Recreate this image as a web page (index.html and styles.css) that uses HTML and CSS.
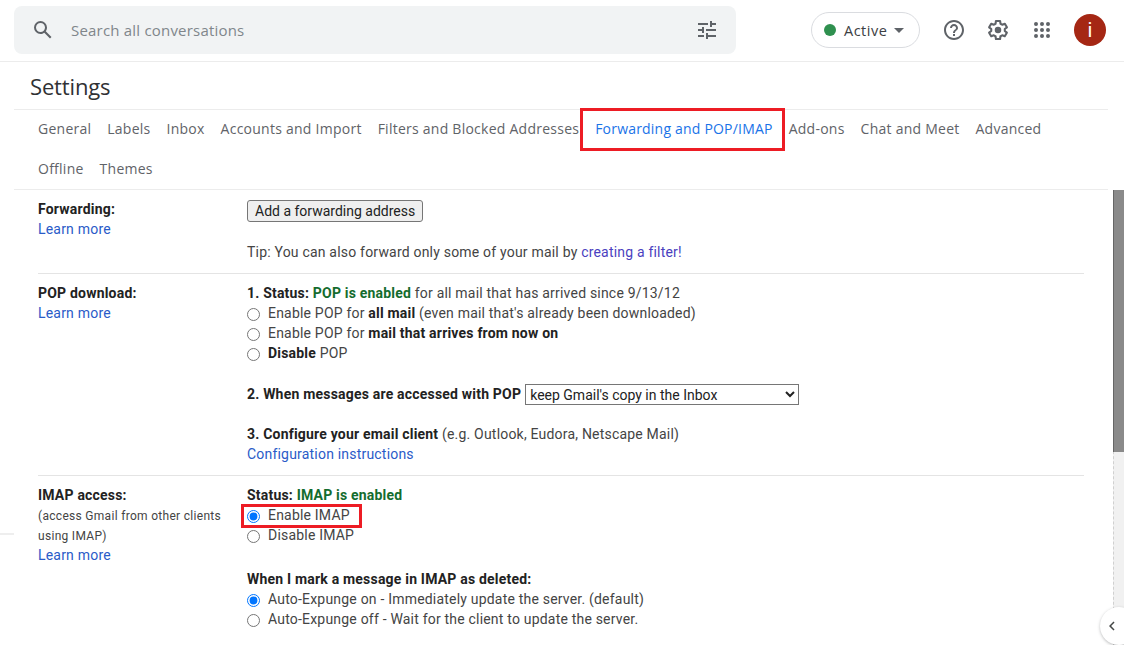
FILE: index.html
```html
<!DOCTYPE html>
<html lang="en">
<head>
<meta charset="utf-8">
<title>Settings</title>
<link rel="stylesheet" href="styles.css">
</head>
<body>
<header class="topbar">
  <div class="search">
    <svg class="search-icon" viewBox="0 0 24 24" width="24" height="24"><path fill="#5f6368" d="M20.49 19l-5.73-5.73C15.53 12.2 16 10.91 16 9.5A6.5 6.5 0 1 0 9.5 16c1.41 0 2.7-.47 3.77-1.24L19 20.49 20.49 19zM5 9.5C5 7.01 7.01 5 9.5 5S14 7.01 14 9.5 11.99 14 9.5 14 5 11.99 5 9.500z"/></svg>
    <span class="search-text">Search all conversations</span>
    <svg class="tune-icon" viewBox="0 0 24 24" width="24" height="24"><path fill="#5f6368" d="M3 17v2h6v-2H3zM3 5v2h10V5H3zm10 16v-2h8v-2h-8v-2h-2v6h2zM7 9v2H3v2h4v2h2V9H7zm14 4v-2H11v2h10zm-6-4h2V7h4V5h-4V3h-2v6z"/></svg>
  </div>
  <div class="status">
    <span class="dot"></span>
    <span class="status-text">Active</span>
    <span class="caret"></span>
  </div>
  <div class="actions">
    <svg viewBox="0 0 24 24" width="24" height="24"><path fill="#5f6368" d="M11 18h2v-2h-2v2zm1-16C6.48 2 2 6.48 2 12s4.48 10 10 10 10-4.48 10-10S17.52 2 12 2zm0 18c-4.41 0-8-3.59-8-8s3.59-8 8-8 8 3.59 8 8-3.59 8-8 8zm0-14c-2.21 0-4 1.790-4 4h2c0-1.100.9-2 2-2s2 .9 2 2c0 2-3 1.750-3 5h2c0-2.250 3-2.500 3-5 0-2.210-1.790-4-4-4z"/></svg>
    <svg viewBox="1 1 22 22" width="24" height="24"><path fill="none" stroke="#5f6368" stroke-width="1.900" stroke-linejoin="round" d="M18.200 12.900c.04-.3.06-.6.06-.9s-.02-.6-.07-.9l2-1.550-1.900-3.300-2.350.95c-.5-.38-1.030-.7-1.620-.94L13.900 3.750h-3.800l-.36 2.510c-.59.24-1.130.57-1.620.94l-2.350-.95-1.900 3.300 2 1.550c-.05.3-.08.6-.08.9s.02.6.07.9l-2 1.550 1.900 3.300 2.350-.95c.5.38 1.030.7 1.620.94l.36 2.510h3.800l.36-2.510c.59-.24 1.130-.56 1.620-.94l2.350.95 1.900-3.300z"/><circle cx="12" cy="12" r="3" fill="#5f6368"/></svg>
    <svg viewBox="0 0 24 24" width="24" height="24"><path fill="#5f6368" d="M6 8a2 2 0 1 0 0-4 2 2 0 0 0 0 4zm6 12a2 2 0 1 0 0-4 2 2 0 0 0 0 4zm-6 0a2 2 0 1 0 0-4 2 2 0 0 0 0 4zm0-6a2 2 0 1 0 0-4 2 2 0 0 0 0 4zm6 0a2 2 0 1 0 0-4 2 2 0 0 0 0 4zm4-8a2 2 0 1 0 4 0 2 2 0 0 0-4 0zm-4 2a2 2 0 1 0 0-4 2 2 0 0 0 0 4zm6 6a2 2 0 1 0 0-4 2 2 0 0 0 0 4zm0 6a2 2 0 1 0 0-4 2 2 0 0 0 0 4z"/></svg>
  </div>
  <div class="avatar">i</div>
</header>

<main class="page">
  <h1 class="title">Settings</h1>
  <nav class="tabs">
    <a class="tab">General</a>
    <a class="tab">Labels</a>
    <a class="tab">Inbox</a>
    <a class="tab">Accounts and Import</a>
    <a class="tab">Filters and Blocked Addresses</a>
    <a class="tab tab-active">Forwarding and POP/IMAP</a>
    <a class="tab">Add-ons</a>
    <a class="tab">Chat and Meet</a>
    <a class="tab">Advanced</a>
    <a class="tab">Offline</a>
    <a class="tab">Themes</a>
  </nav>
  <div class="content">
    <section class="row row-first">
      <div class="label">
        <div class="strong">Forwarding:</div>
        <a class="link">Learn more</a>
      </div>
      <div class="body">
        <button class="btn" type="button">Add a forwarding address</button>
        <p class="tip">Tip: You can also forward only some of your mail by <a class="link-purple">creating a filter!</a></p>
      </div>
    </section>

    <section class="row row-pop">
      <div class="label">
        <div class="strong">POP download:</div>
        <a class="link">Learn more</a>
      </div>
      <div class="body">
        <div class="line"><b>1. Status: <span class="green">POP is enabled</span></b> for all mail that has arrived since 9/13/12</div>
        <label class="opt"><input type="radio" name="pop" class="radio"><span>Enable POP for <b>all mail</b> (even mail that's already been downloaded)</span></label>
        <label class="opt"><input type="radio" name="pop" class="radio"><span>Enable POP for <b>mail that arrives from now on</b></span></label>
        <label class="opt"><input type="radio" name="pop" class="radio"><span><b>Disable</b> POP</span></label>
        <div class="line line-select"><b>2. When messages are accessed with POP</b>
          <select class="select"><option>keep Gmail's copy in the Inbox</option></select>
        </div>
        <div class="line gap"><b>3. Configure your email client</b> (e.g. Outlook, Eudora, Netscape Mail)</div>
        <a class="link">Configuration instructions</a>
      </div>
    </section>

    <section class="row row-imap">
      <div class="label">
        <div class="strong">IMAP access:</div>
        <div class="small">(access Gmail from other clients<br>using IMAP)</div>
        <a class="link">Learn more</a>
      </div>
      <div class="body">
        <div class="line"><b>Status: <span class="green">IMAP is enabled</span></b></div>
        <label class="opt opt-marked"><input type="radio" name="imap" class="radio" checked><span>Enable IMAP</span></label>
        <label class="opt"><input type="radio" name="imap" class="radio"><span>Disable IMAP</span></label>
        <div class="line gap-lg"><b>When I mark a message in IMAP as deleted:</b></div>
        <label class="opt"><input type="radio" name="exp" class="radio" checked><span>Auto-Expunge on - Immediately update the server. (default)</span></label>
        <label class="opt"><input type="radio" name="exp" class="radio"><span>Auto-Expunge off - Wait for the client to update the server.</span></label>
      </div>
    </section>
  </div>
</main>

<div class="scrollbar"><div class="thumb"></div></div>
<div class="edge-line"></div>
<div class="side-toggle">
  <svg viewBox="0 0 24 24" width="18" height="18"><path fill="#444746" d="M15.4 7.4L14 6l-6 6 6 6 1.400-1.400L10.800 12z"/></svg>
</div>
</body>
</html>
```
FILE: styles.css
```css
* { box-sizing: border-box; }
html, body { height: 100%; }
body {
  margin: 0;
  height: 645px;
  overflow: hidden;
  position: relative;
  background: #fff;
  color: #222;
  font-family: Roboto, "Liberation Sans", sans-serif;
  font-size: 14px;
  letter-spacing: .2px;
}
.topbar {
  height: 62px;
  border-bottom: 1px solid #ececec;
  display: flex;
  align-items: center;
  padding: 0 18px 1px 14px;
}
.search {
  width: 722px;
  height: 48px;
  margin-top: -1px;
  background: #f1f3f4;
  border-radius: 8px;
  display: flex;
  align-items: center;
  padding: 0 17px 0 17px;
}
.search-text {
  margin-left: 16px;
  flex: 1;
  font-family: "Open Sans", sans-serif;
  font-size: 15px;
  letter-spacing: .2px;
  color: #80868b;
}
.status {
  margin-left: 75px;
  width: 109px;
  height: 36px;
  border: 1px solid #dadce0;
  border-radius: 18px;
  display: flex;
  align-items: center;
  padding-left: 12px;
}
.dot { width: 12px; height: 12px; border-radius: 50%; background: #2f904f; }
.status-text {
  margin-left: 8px;
  font-family: "Open Sans", sans-serif;
  font-size: 14.5px;
  letter-spacing: .5px;
  color: #3c4043;
}
.caret {
  margin-left: 7px;
  border-left: 5px solid transparent;
  border-right: 5px solid transparent;
  border-top: 5px solid #5f6368;
}
.actions {
  margin-left: 22px;
  display: flex;
  gap: 20px;
}
.avatar {
  margin-left: 20px;
  width: 32px;
  height: 32px;
  border-radius: 50%;
  background: #a52714;
  color: #fff;
  font-size: 20px;
  line-height: 32px;
  text-align: center;
}
.page { padding: 0 16px 0 14px; }
.title {
  margin: 0;
  height: 48px;
  padding: 8px 0 0 16px;
  border-bottom: 1px solid #ececec;
  font-family: "Open Sans", sans-serif;
  font-size: 22px;
  font-weight: 400;
  line-height: 32px;
  letter-spacing: -.15px;
  color: #303134;
}
.tabs {
  display: flex;
  flex-wrap: wrap;
  align-content: flex-start;
  height: 80px;
  padding: 0 24px;
  column-gap: 16px;
  border-bottom: 1px solid #ececec;
}
.tab {
  height: 40px;
  line-height: 38px;
  font-family: "Open Sans", sans-serif;
  font-size: 14px;
  letter-spacing: .25px;
  color: #5f6368;
}
.tab-active {
  color: #1a73e8;
  letter-spacing: .2px;
  outline: 3px solid #ed1c24;
  height: 37px;
  margin: 1px -9px 0 -12px;
  padding: 0 9px 0 12px;
  line-height: 36px;
}
.content { padding: 0 24px 0 24px; }
.row {
  display: grid;
  grid-template-columns: 209px 1fr;
  border-bottom: 1px solid #e4e4e4;
  padding-top: 9px;
  line-height: 20px;
}
.row-first { height: 84px; }
.row-pop { height: 202px; }
.row-imap { border-bottom: 0; }
.strong { font-weight: 700; color: #222; }
.small { font-size: 12px; letter-spacing: .3px; color: #444; padding-top: 1px; margin-bottom: -1px; }
.link { color: #2a5bc8; display: block; }
.link-purple { color: #4a3fc0; }
.btn {
  display: block;
  margin: 1px 0 0;
  height: 22px;
  padding: 0 7px;
  font: inherit;
  letter-spacing: 0;
  line-height: 20px;
  color: #222;
  background: #efefef;
  border: 1px solid #767676;
  border-radius: 3px;
}
.tip { margin: 20px 0 0; color: #444; }
.line { color: #444; }
.line b, .opt b { color: #222; }
.line-select { display: flex; align-items: center; height: 20px; margin-top: 21px; }
.opt { display: flex; align-items: center; height: 20px; color: #444; }
.radio { margin: 2px 8px 0 0; width: 13px; height: 13px; flex: none; }
.green { color: #146c2e; }
.gap { margin-top: 20px; }
.gap-lg { margin-top: 24px; }
.select {
  font: inherit;
  letter-spacing: 0;
  width: 274px;
  height: 21px;
  margin: 1px 0 0 4px;
  padding: 0;
  color: #222;
  background: #fff;
  border: 1px solid #767676;
  border-radius: 0;
}
.opt-marked {
  outline: 3px solid #ed1c24;
  width: 115px;
  height: 18px;
  margin: 2px 0 0 -3px;
  padding-left: 3px;
}
.opt-marked span { margin-bottom: 2px; }
.opt-marked .radio { margin-top: 0; }
.scrollbar {
  position: absolute;
  right: 0;
  top: 190px;
  bottom: 0;
  width: 11px;
  background: #f1f1f1;
  border-left: 1px dashed #d0d0d0;
}
.thumb { height: 262px; background: #8a8a8a; border-left: 1px solid #666; margin-left: -1px; }
.edge-line {
  position: absolute;
  left: 0;
  top: 533px;
  width: 14px;
  height: 2px;
  background: #eee;
}
.side-toggle {
  position: absolute;
  right: -14px;
  top: 607px;
  width: 38px;
  height: 38px;
  border-radius: 50%;
  background: #fff;
  box-shadow: 0 1px 3px rgba(60,64,67,.35);
  padding: 10px 0 0 3px;
}
```
